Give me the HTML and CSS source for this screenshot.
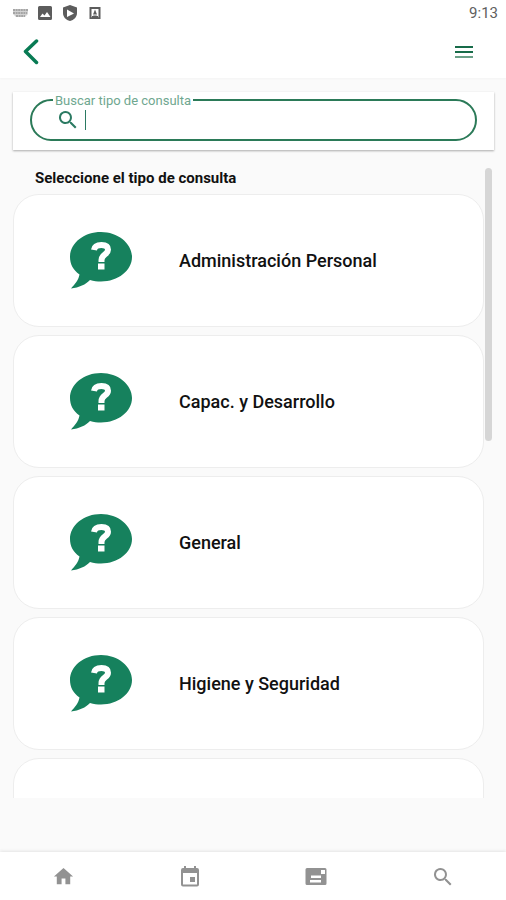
FILE: index.html
```html
<!DOCTYPE html>
<html lang="es">
<head>
<meta charset="utf-8">
<meta name="viewport" content="width=device-width, initial-scale=1">
<title>Tipo de consulta</title>
<link rel="stylesheet" href="styles.css">
</head>
<body>
<svg class="defs" aria-hidden="true">
  <symbol id="bubble" viewBox="0 0 62 57">
    <path fill="#16815d" d="M31 0C14 0 0 11 0 25c0 7 3 13 9.500 17.500C8.500 48 5 52 1 56.500c8-1 15-4 19-8.500 4 1 7 1.500 11 1.500 17 0 31-11 31-24.500S48 0 31 0z"/>
    <path fill="none" stroke="#fff" stroke-width="6" d="M24 18C24.500 14.500 27 13 31.500 13c4.500 0 6.500 1.700 6.500 4.700 0 5-6.500 4.500-6.500 10.300v2"/>
    <path fill="#fff" d="M28 31.500h6.500v6H28z"/>
  </symbol>
  <symbol id="search" viewBox="0 0 24 24">
    <path fill="currentColor" d="M15.500 14h-.8l-.3-.3A6.500 6.500 0 1 0 13.700 14.400l.3.300v.8l5 5 1.500-1.500zm-6 0a4.500 4.500 0 1 1 0-9 4.500 4.500 0 0 1 0 9z"/>
  </symbol>
</svg>
<div class="app">
  <div class="status">
    <div class="status-icons">
      <svg width="16" height="16" viewBox="0 0 16 16"><g fill="none" stroke="#a5a5a5" stroke-width="2" stroke-dasharray="2 .6"><path d="M1 5h15M1 8h14M4 11h9"/></g><path fill="#a5a5a5" opacity=".5" d="M1 4h15v5l-3 3H4L1 9z"/></svg>
      <svg width="16" height="16" viewBox="0 0 16 16"><path fill="#5c5c5c" fill-rule="evenodd" d="M2.500 1h11A1.500 1.500 0 0 1 15 2.500v11a1.500 1.500 0 0 1-1.500 1.500h-11A1.500 1.500 0 0 1 1 13.500v-11A1.500 1.500 0 0 1 2.500 1zM3 12h10.500L10 7l-2.500 3.500L5.500 8.500z"/></svg>
      <svg width="16" height="16" viewBox="0 0 16 16"><path fill="#5c5c5c" fill-rule="evenodd" d="M8 0l7 2.500V8c0 4-3 7-7 8-4-1-7-4-7-8V2.500zM5 4.500v7.500l7-3.500z"/></svg>
      <svg width="16" height="16" viewBox="0 0 16 16"><path fill="#5c5c5c" fill-rule="evenodd" d="M2.500 2h11v12h-11zM4.500 4v8.500l2-2h3l2 2V4z"/><path fill="#5c5c5c" d="M8 4.500l2 5H6zM5 11h6v1.500H5z"/></svg>
    </div>
    <time>9:13</time>
  </div>
  <header class="bar">
    <button class="icon-btn" type="button" aria-label="Volver">
      <svg width="18" height="26" viewBox="0 0 18 26"><path d="M14.500 2L3.500 12.500l11 11" fill="none" stroke="#087b54" stroke-width="3.500" stroke-linecap="round" stroke-linejoin="round"/></svg>
    </button>
    <button class="icon-btn" type="button" aria-label="Menú">
      <svg width="20" height="14" viewBox="0 0 20 14"><path d="M1 2h18M1 7h18" stroke="#176b49" stroke-width="2"/><path d="M1 12h18" stroke="#6ba088" stroke-width="2"/></svg>
    </button>
  </header>
  <main class="content">
    <form class="search-card">
      <div class="field">
        <label class="field-label" for="q">Buscar tipo de consulta</label>
        <svg class="field-icon" width="24" height="24"><use href="#search"/></svg>
        <span class="caret"></span>
        <input id="q" type="text">
      </div>
    </form>
    <section class="list-area">
      <h1 class="title">Seleccione el tipo de consulta</h1>
      <div class="list">
        <button class="item" type="button"><svg class="bubble"><use href="#bubble"/></svg><span>Administración Personal</span></button>
        <button class="item" type="button"><svg class="bubble"><use href="#bubble"/></svg><span>Capac. y Desarrollo</span></button>
        <button class="item" type="button"><svg class="bubble"><use href="#bubble"/></svg><span>General</span></button>
        <button class="item" type="button"><svg class="bubble"><use href="#bubble"/></svg><span>Higiene y Seguridad</span></button>
        <div class="item"></div>
      </div>
      <div class="thumb"></div>
    </section>
  </main>
  <nav class="tabs">
    <a href="#inicio" aria-label="Inicio"><svg width="23" height="23" viewBox="0 0 24 24"><path fill="currentColor" d="M10 20v-6h4v6h5v-8h3L12 3 2 12h3v8z"/></svg></a>
    <a href="#calendario" aria-label="Calendario"><svg width="24" height="24" viewBox="0 0 24 24"><path fill="currentColor" fill-rule="evenodd" d="M19 3h-1V1h-2v2H8V1H6v2H5a2 2 0 0 0-2 2v14.500a2 2 0 0 0 2 2h14a2 2 0 0 0 2-2V5a2 2 0 0 0-2-2zm0 16.500H5V8h14zM12 12h5v5h-5z"/></svg></a>
    <a href="#noticias" aria-label="Noticias"><svg width="24" height="24" viewBox="0 0 24 24"><path fill="currentColor" fill-rule="evenodd" d="M3 3h18a1.500 1.500 0 0 1 1.500 1.500v14A1.500 1.500 0 0 1 21 20H3a1.500 1.500 0 0 1-1.500-1.500v-14A1.500 1.500 0 0 1 3 3zM17 5v4h4V5zM7 10.500V13h10v-2.500zM6 15v2.500h11V15z"/></svg></a>
    <a href="#buscar" aria-label="Buscar"><svg width="24" height="24"><use href="#search"/></svg></a>
  </nav>
</div>
</body>
</html>
```
FILE: styles.css
```css
* { box-sizing: border-box; }
body {
  margin: 0;
  background: #fafafa;
  color: #111;
  font-family: Roboto, "Liberation Sans", sans-serif;
}
button {
  margin: 0;
  padding: 0;
  border: 0;
  background: none;
  color: inherit;
  font: inherit;
}
svg { display: block; }
.defs { position: absolute; width: 0; height: 0; }
.app {
  display: flex;
  flex-direction: column;
  height: 100vh;
}
.status {
  display: flex;
  flex: none;
  align-items: center;
  justify-content: space-between;
  height: 26px;
  padding: 0 8px 0 12px;
  background: #fff;
  color: #606060;
  font-size: 15px;
}
.status-icons { display: flex; gap: 9px; }
.bar {
  display: flex;
  flex: none;
  align-items: center;
  justify-content: space-between;
  height: 52px;
  padding: 0 32px 0 22px;
  background: #fff;
  box-shadow: 0 1px 2px #f4f4f4;
}
.content {
  display: flex;
  flex: 1;
  flex-direction: column;
  min-height: 0;
  padding: 14px 12px 54px 13px;
}
.search-card {
  flex: none;
  padding: 7px 17px 9px;
  background: #fff;
  box-shadow: 0 1px 2px #aaa;
}
.field {
  position: relative;
  display: flex;
  align-items: center;
  height: 42px;
  padding: 0 20px 0 24px;
  border: 2px solid #2b7a58;
  border-radius: 21px;
}
.field-label {
  position: absolute;
  top: -7px;
  left: 21px;
  padding: 0 2px;
  background: #fff;
  color: #6fa78f;
  font-size: 13px;
  line-height: 14px;
}
.field-icon { color: #2b7a62; }
.caret {
  width: 1px;
  height: 20px;
  margin-left: 5px;
  background: #2b7a62;
}
.field input {
  flex: 1;
  min-width: 0;
  border: 0;
  outline: 0;
  background: none;
  font: inherit;
}
.list-area {
  position: relative;
  display: flex;
  flex: 1;
  flex-direction: column;
  min-height: 0;
  padding: 18px 10px 0 0;
}
.title {
  flex: none;
  margin: 0;
  padding-left: 22px;
  font-size: 15px;
  font-weight: 700;
  line-height: 20px;
}
.list {
  display: flex;
  flex: 1;
  flex-direction: column;
  gap: 8px;
  min-height: 0;
  margin-top: 6px;
  overflow: hidden;
}
.item {
  display: flex;
  flex: none;
  align-items: center;
  gap: 47px;
  height: 133px;
  padding-left: 56px;
  border: 1px solid #ededed;
  border-radius: 26px;
  background: #fff;
  font-size: 18px;
  font-weight: 500;
  text-align: left;
}
.bubble { width: 62px; height: 57px; }
.thumb {
  position: absolute;
  top: 18px;
  right: 2px;
  width: 7px;
  height: 273px;
  border-radius: 4px;
  background: #d6d6d6;
}
.tabs {
  display: grid;
  flex: none;
  grid-template-columns: repeat(4, 1fr);
  height: 48px;
  padding-top: 1px;
  background: #fff;
  box-shadow: 0 -1px 3px #e4e4e4;
}
.tabs a {
  display: grid;
  place-items: center;
  color: #929292;
}
```
